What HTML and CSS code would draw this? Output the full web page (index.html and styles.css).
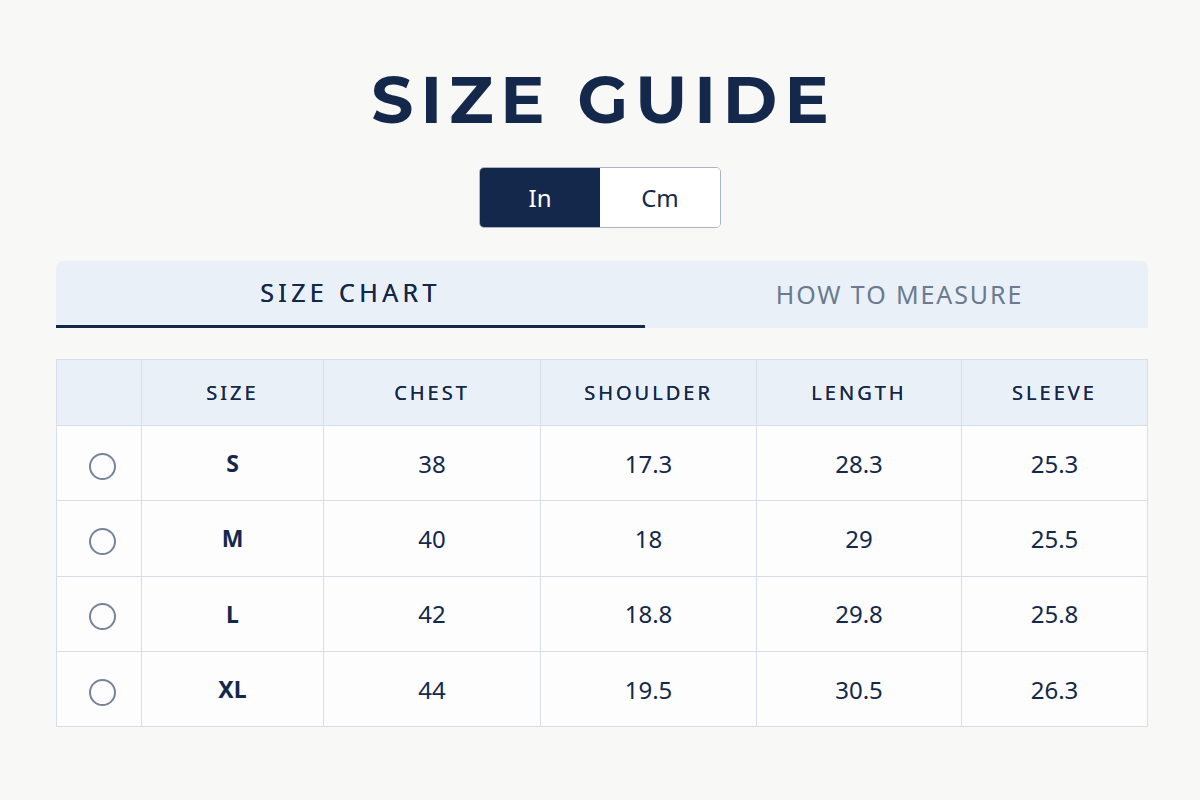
FILE: index.html
```html
<!DOCTYPE html>
<html lang="en">
<head>
<meta charset="utf-8">
<title>Size Guide</title>
<link rel="stylesheet" href="styles.css">
</head>
<body>
<main class="page">
  <h1 class="title">SIZE GUIDE</h1>
  <div class="units">
    <button class="unit active">In</button>
    <button class="unit">Cm</button>
  </div>
  <nav class="tabs">
    <div class="tab current">SIZE CHART</div>
    <div class="tab">HOW TO MEASURE</div>
  </nav>
  <table class="chart">
    <thead>
      <tr><th class="c-radio"></th><th class="c-size">SIZE</th><th class="c-chest">CHEST</th><th class="c-shoulder">SHOULDER</th><th class="c-length">LENGTH</th><th>SLEEVE</th></tr>
    </thead>
    <tbody>
      <tr><td><span class="radio"></span></td><td class="size">S</td><td>38</td><td>17.3</td><td>28.3</td><td>25.3</td></tr>
      <tr><td><span class="radio"></span></td><td class="size">M</td><td>40</td><td>18</td><td>29</td><td>25.5</td></tr>
      <tr><td><span class="radio"></span></td><td class="size">L</td><td>42</td><td>18.8</td><td>29.8</td><td>25.8</td></tr>
      <tr><td><span class="radio"></span></td><td class="size">XL</td><td>44</td><td>19.5</td><td>30.5</td><td>26.3</td></tr>
    </tbody>
  </table>
</main>
</body>
</html>
```
FILE: styles.css
```css
* { box-sizing: border-box; }
html, body { margin: 0; padding: 0; }
body {
  background: #f8f8f7;
  font-family: "Noto Sans", "Open Sans", sans-serif;
  color: #13284b;
  width: 1200px;
  height: 800px;
  overflow: hidden;
}
.page {
  display: flex;
  flex-direction: column;
  align-items: center;
  padding: 0 52px 0 56px;
}
.title {
  margin: 60px 0 0;
  font-family: "Montserrat", "Noto Sans", sans-serif;
  font-weight: 700;
  font-size: 66px;
  line-height: 80px;
  letter-spacing: 7px;
  color: #13284b;
  padding-left: 3px;
}
.units {
  display: flex;
  margin-top: 27px;
  margin-right: 4px;
  border: 1px solid #a9b4c5;
  border-radius: 5px;
  overflow: hidden;
  background: #fff;
}
.unit {
  width: 120px;
  height: 59px;
  border: none;
  background: #fff;
  font-family: "Noto Sans", sans-serif;
  font-size: 24px;
  color: #13284b;
  padding: 0;
}
.unit.active {
  background: #13284b;
  color: #fff;
}
.tabs {
  margin-top: 33px;
  width: 100%;
  height: 67px;
  display: flex;
  background: #eaf0f8;
  border-radius: 7px 7px 0 0;
}
.tab {
  flex: 1;
  display: flex;
  align-items: center;
  justify-content: center;
  font-size: 25px;
  letter-spacing: 1.9px;
  color: #6b7a90;
  padding-bottom: 2px;
  padding-left: 6px;
}
.tab.current {
  flex: 0 0 589px;
  color: #13284b;
  letter-spacing: 4.4px;
  padding-left: 0;
  border-bottom: 3px solid #13284b;
  text-shadow: 0 0 0.5px #13284b;
}
.chart {
  margin-top: 31px;
  width: 100%;
  border-collapse: collapse;
  background: #fdfdfd;
  table-layout: fixed;
}
.chart th, .chart td {
  border: 1px solid #d6dee9;
  text-align: center;
  padding: 0;
}
.chart th {
  height: 66px;
  background: #eaf0f8;
  font-weight: 400;
  font-size: 20px;
  letter-spacing: 3px;
  color: #13284b;
  text-shadow: 0 0 0.4px #13284b;
}
.chart td {
  height: 75.3px;
  font-size: 24px;
  color: #13284b;
}
.c-radio { width: 85px; }
.c-size { width: 182px; }
.c-chest { width: 217px; }
.c-shoulder { width: 216px; }
.c-length { width: 205px; }
.chart td.size { font-weight: 700; font-size: 23px; }
.radio {
  display: inline-block;
  width: 27px;
  height: 27px;
  border: 2px solid #76839a;
  border-radius: 50%;
  vertical-align: middle;
  margin-left: 7px;
}
```
